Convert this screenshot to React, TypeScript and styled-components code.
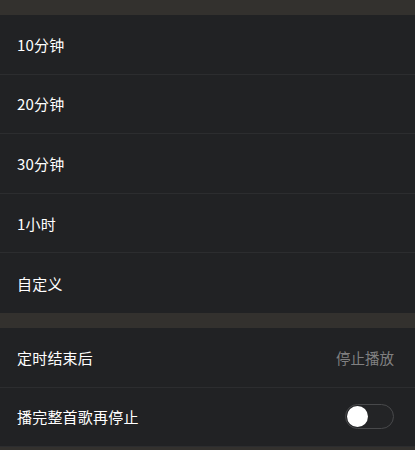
import React from "react";
import styled, { createGlobalStyle } from "styled-components";

const GlobalStyle = createGlobalStyle`
  html, body {
    margin: 0;
    padding: 0;
    background: #212224;
  }
  body {
    font-family: "Noto Sans CJK SC", "Noto Sans", sans-serif;
  }
`;

const Page = styled.div`
  width: 415px;
  height: 450px;
  overflow: hidden;
  background: #212224;
`;

const Band = styled.div<{ $h: number }>`
  height: ${(p) => p.$h}px;
  background: #33312e;
`;

const Section = styled.div`
  display: flex;
  flex-direction: column;
`;

const Row = styled.div<{ $last?: boolean }>`
  height: 59.6px;
  box-sizing: border-box;
  display: flex;
  align-items: center;
  justify-content: space-between;
  padding: 0 21px 0 17px;
  border-bottom: ${(p) => (p.$last ? "none" : "1px solid #2c2d2f")};
  color: #ffffff;
  font-size: 15px;
  font-weight: 400;
`;

const Label = styled.span`
  letter-spacing: 0.2px;
`;

const Value = styled.span`
  color: #808081;
  font-size: 14.5px;
`;

const Track = styled.div<{ $on: boolean }>`
  width: 49px;
  height: 25px;
  box-sizing: border-box;
  border-radius: 13px;
  border: 1.5px solid #48494b;
  background: ${(p) => (p.$on ? "#e0413a" : "#232426")};
  display: flex;
  align-items: center;
  padding: 0 1px;
  justify-content: ${(p) => (p.$on ? "flex-end" : "flex-start")};
`;

const Knob = styled.div`
  width: 21px;
  height: 21px;
  border-radius: 50%;
  background: #ffffff;
`;

const durations = ["10分钟", "20分钟", "30分钟", "1小时", "自定义"];

export default function App() {
  return (
    <Page>
      <GlobalStyle />
      <Band $h={15} />
      <Section>
        {durations.map((d, i) => (
          <Row key={d} $last={i === durations.length - 1}>
            <Label>{d}</Label>
          </Row>
        ))}
      </Section>
      <Band $h={15} />
      <Section>
        <Row>
          <Label>定时结束后</Label>
          <Value>停止播放</Value>
        </Row>
        <Row>
          <Label>播完整首歌再停止</Label>
          <Track $on={false}>
            <Knob />
          </Track>
        </Row>
      </Section>
      <Band $h={3} />
    </Page>
  );
}
